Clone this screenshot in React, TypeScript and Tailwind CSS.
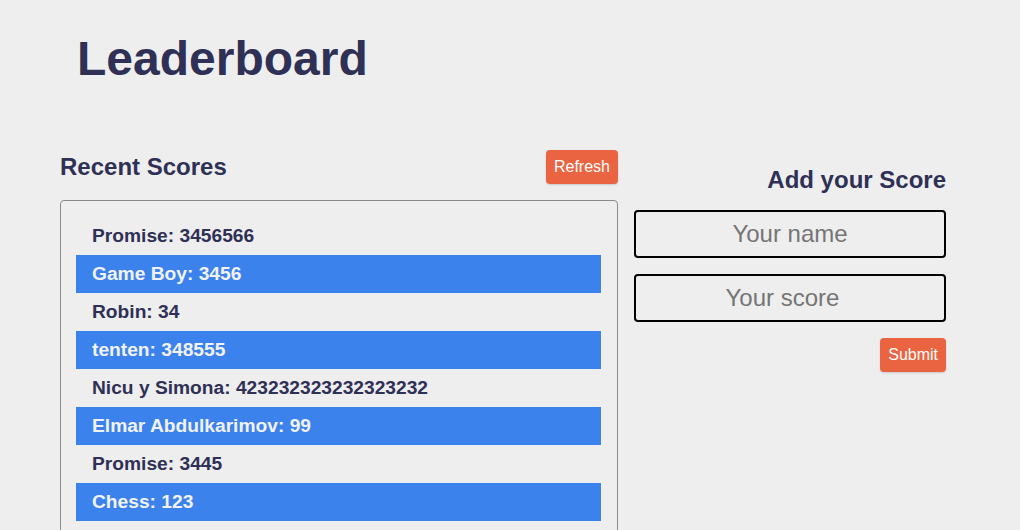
const scores = [
  { name: "Promise", score: "3456566" },
  { name: "Game Boy", score: "3456" },
  { name: "Robin", score: "34" },
  { name: "tenten", score: "348555" },
  { name: "Nicu y Simona", score: "423232323232323232" },
  { name: "Elmar Abdulkarimov", score: "99" },
  { name: "Promise", score: "3445" },
  { name: "Chess", score: "123" },
];

export default function App() {
  return (
    <div className="h-screen overflow-hidden bg-[#eeeeee] font-['Liberation_Sans',Arial,sans-serif] text-[#2f3055]">
      <h1 className="pl-[77px] pt-[31px] text-[48px] font-bold leading-[55px]">Leaderboard</h1>

      <div className="mt-[64px] flex gap-4 pl-[60px]">
        {/* ── Recent scores ─────────────────────────── */}
        <section className="w-[558px]">
          <div className="flex h-[34px] items-center justify-between">
            <h2 className="text-[24px] font-bold leading-[28px]">Recent Scores</h2>
            <button className="h-[34px] rounded-[4px] bg-[#eb6441] px-2 text-[16px] text-white shadow-[0_1px_2px_rgba(0,0,0,0.15)]">
              Refresh
            </button>
          </div>
          <ul className="mt-4 rounded-[4px] border border-[#8a8a8a] pl-[15px] pr-[16px] pt-[16px] pb-4">
            {scores.map((s, i) => (
              <li
                key={i}
                className={`flex h-[38px] items-center pl-4 text-[19.2px] font-bold ${
                  i % 2 === 1 ? "bg-[#3b82ec] text-[#f2f2f2]" : "text-[#2f3055]"
                }`}
              >
                {s.name}: {s.score}
              </li>
            ))}
          </ul>
        </section>

        {/* ── Add score form ─────────────────────────── */}
        <section className="flex w-[312px] flex-col pt-[16px]">
          <h2 className="text-right text-[24px] font-bold leading-[28px]">Add your Score</h2>
          <input
            type="text"
            placeholder="Your name"
            className="mt-4 h-12 w-full rounded-[4px] border-2 border-black bg-transparent text-center text-[24px] outline-none placeholder:text-[#757575]"
          />
          <input
            type="number"
            placeholder="Your score"
            className="mt-4 h-12 w-full rounded-[4px] border-2 border-black bg-transparent text-center text-[24px] outline-none placeholder:text-[#757575]"
          />
          <div className="mt-4 flex justify-end">
            <button className="h-[34px] rounded-[4px] bg-[#eb6441] px-2 text-[16px] text-white shadow-[0_1px_2px_rgba(0,0,0,0.15)]">
              Submit
            </button>
          </div>
        </section>
      </div>
    </div>
  );
}
